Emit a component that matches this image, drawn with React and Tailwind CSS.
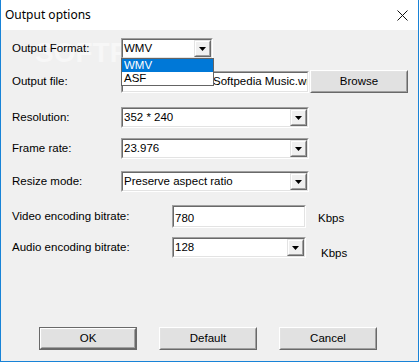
import React from 'react';

const Sunken = ({ className = '', children }) => (
  <div className={`border border-t-[#a0a0a0] border-l-[#a0a0a0] border-b-white border-r-white ${className}`}>
    <div className="h-full border border-t-[#696969] border-l-[#696969] border-b-[#e3e3e3] border-r-[#e3e3e3] bg-white flex items-stretch overflow-hidden">
      {children}
    </div>
  </div>
);

const ArrowButton = () => (
  <div className="w-[17px] border border-t-[#e3e3e3] border-l-[#e3e3e3] border-b-[#696969] border-r-[#696969]">
    <div className="h-full border border-t-white border-l-white border-b-[#a0a0a0] border-r-[#a0a0a0] bg-[#f0f0f0] flex items-center justify-center">
      <svg width="7" height="4" viewBox="0 0 7 4">
        <path d="M0 0H7L3.5 4Z" fill="#000" />
      </svg>
    </div>
  </div>
);

const Combo = ({ value, className = '' }) => (
  <Sunken className={className}>
    <span className="flex-1 pl-[1px] flex items-center leading-none">{value}</span>
    <ArrowButton />
  </Sunken>
);

const Button = ({ label, primary }) => (
  <div className={`w-[98px] h-[23px] ${primary ? 'border border-[#696969]' : ''}`}>
    <div className="h-full border border-t-white border-l-white border-b-[#696969] border-r-[#696969]">
      <div className="h-full border border-t-[#e3e3e3] border-l-[#e3e3e3] border-b-[#a0a0a0] border-r-[#a0a0a0] bg-[#e1e1e1] flex items-center justify-center">
        {label}
      </div>
    </div>
  </div>
);

const Row = ({ label, labelW = 'w-[109px]', className = '', children }) => (
  <div className={`flex items-center pl-[11px] ${className}`}>
    <span className={`${labelW} shrink-0`}>{label}</span>
    {children}
  </div>
);

export default function App() {
  return (
    <div className="w-[419px] h-[362px] border-x border-b border-[#1883d7] flex flex-col font-['Liberation_Sans',Arial,sans-serif] text-[11.5px] text-black overflow-hidden">
      <div className="h-[30px] shrink-0 bg-white flex items-center justify-between pl-[4px] pr-[10px]">
        <span className="font-['Noto_Sans',sans-serif] text-[12px] text-black">Output options</span>
        <svg width="11" height="11" viewBox="0 0 11 11">
          <path d="M0.5 0.5L10.5 10.5M10.5 0.5L0.5 10.5" stroke="#111" strokeWidth="1" />
        </svg>
      </div>

      <div className="relative flex-1 bg-[#f0f0f0]">
        <div className="absolute left-[34px] top-[9px] text-[28px] font-bold text-[#f7f7f7] leading-none select-none">
          SOFTPEDIA
        </div>

        <div className="relative flex flex-col">
          <Row label="Output Format:" className="mt-[8px] h-[21px]">
            <Combo value="WMV" className="w-[92px] h-[21px]" />
          </Row>

          <Row label="Output file:" className="mt-[11px] h-[23px]">
            <Sunken className="w-[188px] h-[22px]">
              <span className="pl-[1px] flex items-center whitespace-nowrap">
                <span className="w-[89px] overflow-hidden inline-block">C:\Users\Videos\</span>
                <span>Softpedia Music.wmv</span>
              </span>
            </Sunken>
            <div className="ml-[1px]">
              <Button label="Browse" />
            </div>
          </Row>

          <Row label="Resolution:" className="mt-[14px] h-[21px]">
            <Combo value="352 * 240" className="w-[188px] h-[21px]" />
          </Row>

          <Row label="Frame rate:" className="mt-[10px] h-[21px]">
            <Combo value="23.976" className="w-[188px] h-[21px]" />
          </Row>

          <Row label="Resize mode:" className="mt-[12px] h-[21px]">
            <Combo value="Preserve aspect ratio" className="w-[188px] h-[21px]" />
          </Row>

          <Row label="Video encoding bitrate:" labelW="w-[160px]" className="mt-[13px] h-[23px]">
            <Sunken className="w-[134px] h-[23px]">
              <span className="pl-[1px] pt-[3px]">780</span>
            </Sunken>
            <span className="ml-[12px] mt-[5px]">Kbps</span>
          </Row>

          <Row label="Audio encoding bitrate:" labelW="w-[160px]" className="mt-[9px] h-[21px]">
            <Combo value="128" className="w-[134px] h-[21px]" />
            <span className="ml-[15px] mt-[12px]">Kbps</span>
          </Row>

          <div className="mt-[69px] flex pl-[38px] gap-[22px]">
            <Button label="OK" primary />
            <Button label="Default" />
            <Button label="Cancel" />
          </div>
        </div>

        <div className="absolute left-[120px] top-[28px] w-[93px] h-[28px] border border-[#646464] bg-white flex flex-col">
          <div className="h-[13px] bg-[#0078d7] text-white pl-[2px] flex items-center">WMV</div>
          <div className="h-[13px] pl-[2px] flex items-center">ASF</div>
        </div>
      </div>
    </div>
  );
}
